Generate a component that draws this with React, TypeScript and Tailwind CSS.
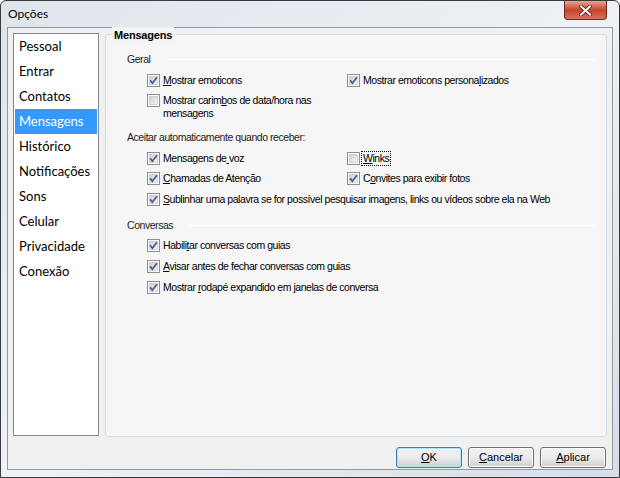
import React from 'react';

const navItems = ['Pessoal', 'Entrar', 'Contatos', 'Mensagens', 'Histórico', 'Notificações', 'Sons', 'Celular', 'Privacidade', 'Conexão'];

const Box = ({ checked }: { checked: boolean }) => (
  <svg width="13" height="13" viewBox="0 0 13 13" className="shrink-0">
    <defs>
      <linearGradient id="cbg" x1="0" y1="0" x2="1" y2="1">
        <stop offset="0" stopColor="#cbcfd5" />
        <stop offset="1" stopColor="#f6f6f6" />
      </linearGradient>
    </defs>
    <rect x="0.5" y="0.5" width="12" height="12" fill="#fff" stroke="#8e8f8f" />
    <rect x="2.5" y="2.5" width="8" height="8" fill="url(#cbg)" stroke="#b8bcc4" strokeWidth="0.6" />
    {checked && <path d="M3.2 6.4 L5.4 9.2 L9.9 3.2" fill="none" stroke="#41598f" strokeWidth="1.7" />}
  </svg>
);

// label with one underlined mnemonic letter at index u
const Check = ({ text, u, checked = true, focus = false }: { text: string; u: number; checked?: boolean; focus?: boolean }) => (
  <div className="flex items-start gap-[1px] whitespace-nowrap">
    <Box checked={checked} />
    <span className={`ml-[1px] leading-[13px] px-[1px] ${focus ? 'outline outline-1 outline-dotted outline-black' : ''}`}>
      {text.slice(0, u)}
      <span className="underline underline-offset-1">{text[u]}</span>
      {text.slice(u + 1)}
    </span>
  </div>
);

const Section = ({ title }: { title: string }) => (
  <div className="flex items-center">
    <span className="text-[#222]">{title}</span>
    <div className="flex-1 ml-4 h-px bg-[#a0a0a0] border-b border-white" />
  </div>
);

const Btn = ({ label, u, primary = false }: { label: string; u: number; primary?: boolean }) => (
  <button
    className={`w-[66px] h-[21px] rounded-[3px] border bg-gradient-to-b from-[#f2f2f2] via-[#ebebeb] to-[#cfcfcf] text-[11px] text-black ${primary ? 'border-[#3c7fb1] shadow-[inset_0_0_0_1px_#aee4f8]' : 'border-[#707070] shadow-[inset_0_0_0_1px_#fcfcfc]'}`}
  >
    {label.slice(0, u)}
    <span className="underline underline-offset-1">{label[u]}</span>
    {label.slice(u + 1)}
  </button>
);

export default function App() {
  return (
    <div className="w-[620px] h-[478px] relative overflow-hidden border border-[#3a3a3a] rounded-t-[6px] bg-gradient-to-br from-[#dfe5ec] via-[#eef2f6] to-[#d8dee6] flex flex-col" style={{ fontFamily: '"Liberation Sans", Arial, sans-serif' }}>
      {/* title bar */}
      <div className="h-[26px] flex items-center pl-[7px] text-[12px] text-black" style={{ fontFamily: 'Lato, "Open Sans", sans-serif' }}>
        Opções
      </div>
      <div className="absolute top-0 right-[12px] w-[43px] h-[19px] rounded-b-[4px] border border-t-0 border-[#6b2a22] bg-gradient-to-b from-[#e8a493] via-[#c7432a] to-[#d6705a] flex items-center justify-center">
        <svg width="13" height="11" viewBox="0 0 13 11">
          <path d="M2 1.5 L11 9.5 M11 1.5 L2 9.5" stroke="#5a1a12" strokeWidth="3.6" strokeLinecap="square" />
          <path d="M2 1.5 L11 9.5 M11 1.5 L2 9.5" stroke="#fff" strokeWidth="2" strokeLinecap="square" />
        </svg>
      </div>

      {/* client */}
      <div className="mx-[6px] mb-[7px] flex-1 bg-[#f0f0f0] border border-[#8e9aa6] flex flex-col">
        <div className="flex gap-[6px] pt-[5px] px-[5px]">
          {/* left list */}
          <div className="w-[86px] h-[403px] bg-white border border-[#828790] px-[1px] pt-0 text-[13px]" style={{ fontFamily: 'Lato, "Open Sans", sans-serif' }}>
            {navItems.map((n) => (
              <div key={n} className={`h-[25px] flex items-center pl-[4px] ${n === 'Mensagens' ? 'bg-[#3399ff] text-white' : 'text-black'}`}>
                {n}
              </div>
            ))}
          </div>

          {/* group box */}
          <div className="relative flex-1 h-[403px] border border-[#d5dfe5] rounded-[3px] mt-[1px] bg-white/40 pl-[21px] pr-[10px] pt-[17px] text-[10.5px] tracking-[-0.45px] text-black">
            <div className="absolute -top-[8px] left-[6px] px-[2px] bg-[#f2f4f5] font-bold text-[11px] tracking-[-0.2px]">
              Mensagens
            </div>

            <Section title="Geral" />
            <div className="pl-[20px] mt-[6px]">
              <div className="grid grid-cols-[200px_1fr]">
                <Check text="Mostrar emoticons" u={0} />
                <Check text="Mostrar emoticons personalizados" u={25} />
              </div>
              <div className="flex items-start gap-[1px] mt-[7px]">
                <Box checked={false} />
                <div className="ml-[2px] leading-[13px] whitespace-nowrap">
                  <div>
                    Mostrar carim<span className="underline underline-offset-1">b</span>os de data/hora nas
                  </div>
                  <div>mensagens</div>
                </div>
              </div>
            </div>

            <div className="mt-[10px] text-[#222]">Aceitar automaticamente quando receber:</div>
            <div className="pl-[20px] mt-[6px] flex flex-col gap-[7.5px]">
              <div className="grid grid-cols-[200px_1fr]">
                <Check text="Mensagens de voz" u={12} />
                <Check text="Winks" u={0} checked={false} focus />
              </div>
              <div className="grid grid-cols-[200px_1fr]">
                <Check text="Chamadas de Atenção" u={0} />
                <Check text="Convites para exibir fotos" u={1} />
              </div>
              <Check text="Sublinhar uma palavra se for possível pesquisar imagens, links ou vídeos sobre ela na Web" u={0} />
            </div>

            <div className="mt-[12px]">
              <Section title="Conversas" />
            </div>
            <div className="pl-[20px] mt-[6px] flex flex-col gap-[8px]">
              <Check text="Habilitar conversas com guias" u={6} />
              <Check text="Avisar antes de fechar conversas com guias" u={0} />
              <Check text="Mostrar rodapé expandido em janelas de conversa" u={8} />
            </div>
          </div>
        </div>

        {/* buttons */}
        <div className="flex justify-end gap-[6px] pr-[6px] mt-[10px]">
          <Btn label="OK" u={0} primary />
          <Btn label="Cancelar" u={0} />
          <Btn label="Aplicar" u={0} />
        </div>
      </div>
    </div>
  );
}
